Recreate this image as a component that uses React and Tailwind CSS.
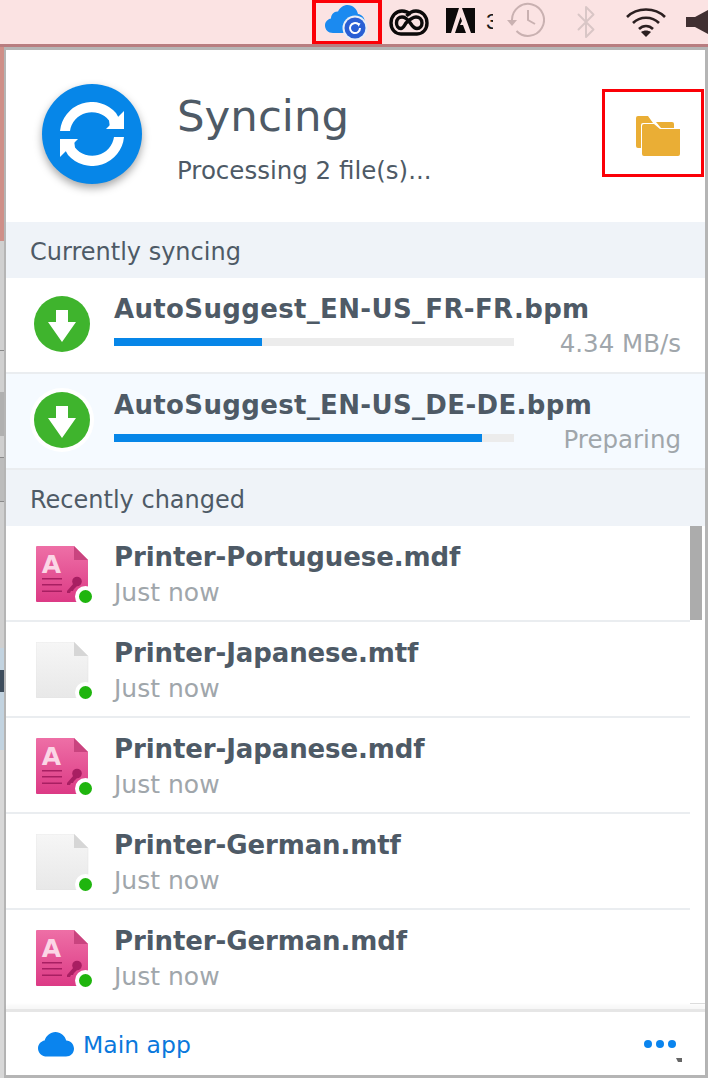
import React from "react";
import { Bluetooth } from "lucide-react";

const syncing = [
  { name: "AutoSuggest_EN-US_FR-FR.bpm", pct: 37, status: "4.34 MB/s", active: false },
  { name: "AutoSuggest_EN-US_DE-DE.bpm", pct: 92, status: "Preparing", active: true },
];

const recent = [
  { name: "Printer-Portuguese.mdf", type: "mdf" },
  { name: "Printer-Japanese.mtf", type: "mtf" },
  { name: "Printer-Japanese.mdf", type: "mdf" },
  { name: "Printer-German.mtf", type: "mtf" },
  { name: "Printer-German.mdf", type: "mdf" },
];

const CLOUD = "M9 24.5C4 24.5 0 21 0 16.2 0 12 3 9 6.6 8.4 8.2 3.6 12.4 0 17.4 0c5.2 0 9.5 3.6 10.8 8.5C32.8 8.8 36 12.4 36 16.8 36 21.3 32.5 24.5 28 24.5Z";

const MdfIcon = () => (
  <svg width="54" height="56" viewBox="0 0 54 56" className="block">
    <defs>
      <linearGradient id="mdfBody" x1="0" y1="0" x2="0" y2="1">
        <stop offset="0" stopColor="#ee6fa6" />
        <stop offset="1" stopColor="#dc3a85" />
      </linearGradient>
    </defs>
    <path d="M1 0H38L52 14V55a1 1 0 0 1-1 1H1a1 1 0 0 1-1-1V1a1 1 0 0 1 1-1Z" fill="url(#mdfBody)" />
    <path d="M38 0L52 14H38Z" fill="#c9447f" />
    <text x="15.5" y="27" fontSize="25" fontWeight="bold" textAnchor="middle" fill="#fbd6e6" fontFamily="'DejaVu Sans', sans-serif">A</text>
    <path d="M6 32h20v1.6H6ZM6 38h20v1.6H6ZM6 44.5h20v1.6H6Z" fill="#a81f62" />
    <circle cx="41" cy="35.5" r="4.8" fill="#a81f62" />
    <path d="M38 37L31 45v2h3l1-2h2l1-2 3-3Z" fill="#a81f62" />
  </svg>
);

const MtfIcon = () => (
  <svg width="54" height="56" viewBox="0 0 54 56" className="block">
    <defs>
      <linearGradient id="mtfBody" x1="0" y1="0" x2="0" y2="1">
        <stop offset="0" stopColor="#f6f6f6" />
        <stop offset="1" stopColor="#e8e8e8" />
      </linearGradient>
    </defs>
    <path d="M1 0H38L52 14V55a1 1 0 0 1-1 1H1a1 1 0 0 1-1-1V1a1 1 0 0 1 1-1Z" fill="url(#mtfBody)" stroke="#e2e2e2" strokeWidth="0.5" />
    <path d="M38 0L52 14H38Z" fill="#d6d6d6" />
  </svg>
);

const DownloadBadge = ({ ring }) => (
  <div className={`w-[64px] h-[64px] rounded-full flex items-center justify-center shrink-0 ${ring ? "bg-white" : ""}`}>
    <svg width="56" height="56" viewBox="0 0 56 56">
      <circle cx="28" cy="28" r="28" fill="#3fb42d" />
      <path d="M22 14H34V26H42L28 46 14 26H22Z" fill="#fff" />
    </svg>
  </div>
);

function MenuBar() {
  return (
    <div className="h-[47px] shrink-0 bg-[#fbe3e3] border-b-[3px] border-[#b87d80] flex items-center overflow-hidden">
      <div className="ml-[312px] w-[70px] h-[46px] border-[4px] border-[#fb0007] flex items-center justify-center shrink-0">
        <svg width="44" height="36" viewBox="0 0 44 36" className="mt-[1px]">
          <path d="M8 28C3 28 0 24.5 0 20.5 0 16.5 3 14 6 13.5 6 9 9.5 6 13 6.5 15 2.5 18.5 0 22.5 0 28 0 32 4 33 9 37 9.5 40 13 40 18 40 24 36 28 31 28Z" fill="#1b8af0" />
          <circle cx="30" cy="23" r="12.5" fill="#e9eef6" />
          <circle cx="30" cy="23" r="10.5" fill="#2a5fd4" />
          <path d="M35 23a5 5 0 1 1-1.8-3.8" fill="none" stroke="#fff" strokeWidth="2" />
          <path d="M32 17.5l3.5 1-2 3.2Z" fill="#fff" />
        </svg>
      </div>
      {/* creative cloud */}
      <svg width="40" height="28" viewBox="0 0 40 28" className="ml-[7px] shrink-0">
        <path d="M12 26H28C34 26 38 21 38 15 38 8 33 3 27 3 23 3 20 5 17.5 8M22 6.5C19 4 16 3 13 3 7 3 2 8 2 15 2 21 6 26 12 26" fill="none" stroke="#0c0a0a" strokeWidth="3.4" />
        <path d="M12 20.5C9 20.5 7.5 17.5 7.5 15 7.5 11 10 9 13 9 18 9 20 14 22 16 24 19 26 20.5 28 20.5 31 20.5 33 18 33 15 33 11 30 9 27 9 23 9 20 12 17 15 15 18 14 20.5 12 20.5Z" fill="none" stroke="#0c0a0a" strokeWidth="3.4" />
      </svg>
      {/* adobe */}
      <svg width="29" height="25" viewBox="0 0 29 25" className="ml-[17px] -mt-[4px] shrink-0">
        <path d="M0 0H29V25H0Z" fill="#0c0a0a" />
        <path d="M13 0H16L25 25H20L17 17H14L16 13 14.5 9 9 25H5Z" fill="#fbe3e3" />
      </svg>
      <div className="w-[7px] ml-[11px] overflow-hidden text-[22px] leading-none font-['Liberation_Sans',sans-serif] text-[#1a1a1a] shrink-0">3</div>
      {/* time machine */}
      <svg width="38" height="36" viewBox="0 0 38 36" className="ml-[14px] -mt-[4px] shrink-0">
        <path d="M5 18A16 16 0 1 1 9.5 29" fill="none" stroke="#c9b1b1" strokeWidth="2" />
        <path d="M0 18H10L5 24Z" fill="#c9b1b1" />
        <path d="M21 8V18L28 22" fill="none" stroke="#c9b1b1" strokeWidth="2" />
      </svg>
      <Bluetooth size={36} strokeWidth={1.3} className="text-[#d9c6c6] ml-[23px] shrink-0" />
      <svg width="42" height="32" viewBox="0 0 42 32" className="ml-[21px] shrink-0">
        <path d="M2 11C12 1 30 1 40 11M8 17C15 10 27 10 34 17M14 23C18 19 24 19 28 23" fill="none" stroke="#2b1f20" strokeWidth="2.6" />
        <path d="M16 26L21 31 26 26C23 24 19 24 16 26Z" fill="#2b1f20" />
      </svg>
      <svg width="22" height="24" viewBox="0 0 22 24" className="ml-[19px] shrink-0">
        <path d="M0 7H9L22 0V24L9 17H0Z" fill="#403032" />
      </svg>
    </div>
  );
}

function Header() {
  return (
    <div className="h-[172px] flex items-center shrink-0 bg-white">
      <div className="ml-[36px] mb-[4px] w-[100px] h-[100px] rounded-full bg-[#0686e8] shadow-[0_4px_8px_rgba(0,0,0,0.35)] flex items-center justify-center shrink-0">
        <svg width="64" height="64" viewBox="0 0 64 64">
          <path d="M0 29A32 32 0 0 1 56 11L60 18 50 26 49 18.5A22 22 0 0 0 10 29Z" fill="#fff" />
          <path d="M64 9V27H46Z" fill="#fff" />
          <g transform="rotate(180 32 32)">
            <path d="M0 29A32 32 0 0 1 56 11L60 18 50 26 49 18.5A22 22 0 0 0 10 29Z" fill="#fff" />
            <path d="M64 9V27H46Z" fill="#fff" />
          </g>
        </svg>
      </div>
      <div className="ml-[35px] mt-[4px] flex-1 text-[#4e5a66]">
        <div className="text-[43.5px] leading-[50px]">Syncing</div>
        <div className="text-[24.5px] leading-[28px] mt-[16px]">Processing 2 file(s)...</div>
      </div>
      <div className="w-[102px] h-[88px] mr-[1px] mb-[6px] border-[3px] border-[#fb0007] flex items-center justify-center shrink-0">
        <svg width="44" height="40" viewBox="0 0 44 40" className="ml-[10px] mt-[6px]">
          <path d="M0 2a2 2 0 0 1 2-2H12L17 7H7a2 2 0 0 0-2 2V32H2a2 2 0 0 1-2-2Z" fill="#eaae35" />
          <path d="M20 6H36a2 2 0 0 1 2 2V12H25Z" fill="#eaae35" />
          <path d="M6 10a2 2 0 0 1 2-2H18L24 13H44V38a2 2 0 0 1-2 2H8a2 2 0 0 1-2-2Z" fill="#eaae35" />
        </svg>
      </div>
    </div>
  );
}

const SectionTitle = ({ children }) => (
  <div className="h-[56px] bg-[#eff3f8] text-[#4e5a66] text-[24px] pl-[24px] pt-[3px] flex items-center shrink-0">{children}</div>
);

function SyncRow({ item }) {
  return (
    <div className={`h-[96px] shrink-0 flex border-b-2 border-[#eaedf0] ${item.active ? "bg-[#f5faff]" : "bg-white"}`}>
      <div className="w-[108px] pl-[24px] pt-[14px] shrink-0">
        <DownloadBadge ring={item.active} />
      </div>
      <div className="flex-1 pr-[24px] pt-[14px]">
        <div className="text-[26px] tracking-[0.35px] leading-[34px] font-bold text-[#4e5a66] whitespace-nowrap">{item.name}</div>
        <div className="w-[400px] h-[8px] bg-[#ececec] mt-[12px]">
          <div className="h-full bg-[#0686e8]" style={{ width: `${item.pct}%` }} />
        </div>
        <div className="text-[24.5px] leading-[28px] text-[#a0a6ab] text-right -mt-[16px]">{item.status}</div>
      </div>
    </div>
  );
}

function RecentRow({ item }) {
  return (
    <div className="h-[96px] shrink-0 flex border-b-2 last:border-b-0 border-[#eaedf0] bg-white">
      <div className="w-[108px] pl-[30px] pt-[20px] shrink-0 relative">
        {item.type === "mdf" ? <MdfIcon /> : <MtfIcon />}
        <span className="absolute left-[69px] top-[60px] w-[13px] h-[13px] rounded-full bg-[#1fb50e] border-[4px] border-white box-content" />
      </div>
      <div className="flex-1 pt-[14px]">
        <div className="text-[26px] tracking-[-0.1px] leading-[34px] font-bold text-[#4e5a66] whitespace-nowrap">{item.name}</div>
        <div className="text-[25px] leading-[28px] text-[#a0a6ab] mt-[5px]">Just now</div>
      </div>
    </div>
  );
}

function Footer() {
  return (
    <div className="h-[66px] shrink-0 bg-white border-t-[3px] border-[#e6e6e6] flex items-center pl-[32px] pr-[29px] pt-[4px] relative shadow-[0_-4px_3px_rgba(0,0,0,0.03)]">
      <svg width="36" height="25" viewBox="0 0 36 25" className="shrink-0 -mt-[2px]">
        <path d={CLOUD} fill="#0a84ee" />
      </svg>
      <span className="ml-[9px] text-[23.5px] text-[#0a78dc] flex-1">Main app</span>
      <div className="flex gap-[4px] mb-[4px]">
        <span className="w-[8px] h-[8px] rounded-full bg-[#0a84ee]" />
        <span className="w-[8px] h-[8px] rounded-full bg-[#0a84ee]" />
        <span className="w-[8px] h-[8px] rounded-full bg-[#0a84ee]" />
      </div>
      <svg width="6" height="4" viewBox="0 0 6 4" className="absolute right-[23px] bottom-[13px]">
        <path d="M0 0H6V4H2Z" fill="#666" />
      </svg>
    </div>
  );
}

export default function App() {
  return (
    <div className="w-[708px] h-[1078px] flex flex-col overflow-hidden bg-[#fbe3e3] font-['DejaVu_Sans',sans-serif]">
      <MenuBar />
      <div className="flex-1 flex min-h-0">
        {/* desktop showing behind the popup */}
        <div className="w-[4px] shrink-0 flex flex-col">
          <div className="h-[194px] bg-[#cf8f88]" />
          <div className="h-[110px] bg-[#d0d0d0] border-b border-[#8a8a8a]" />
          <div className="h-[41px] bg-[#d0d0d0]" />
          <div className="h-[44px] bg-[#b0b0b0]" />
          <div className="h-[22px] bg-[#cfcfcf] border-b border-[#8a8a8a]" />
          <div className="h-[44px] bg-[#bcbcbc] border-b border-[#8a8a8a]" />
          <div className="h-[146px] bg-[#cfcfcf]" />
          <div className="h-[22px] bg-[#c2d3e0]" />
          <div className="h-[22px] bg-[#3e4d5c]" />
          <div className="h-[58px] bg-[#c2d3e0]" />
          <div className="flex-1 bg-[#d8d8d8]" />
        </div>
        <div className="flex-1 min-w-0 flex flex-col bg-white border-l-2 border-t-[3px] border-r-[3px] border-b-[3px] border-[#b5b5b5]">
          <Header />
          <SectionTitle>Currently syncing</SectionTitle>
          {syncing.map((s) => (
            <SyncRow key={s.name} item={s} />
          ))}
          <SectionTitle>Recently changed</SectionTitle>
          <div className="flex-1 min-h-0 flex overflow-hidden">
            <div className="w-[684px] shrink-0 flex flex-col overflow-hidden">
              {recent.map((r) => (
                <RecentRow key={r.name} item={r} />
              ))}
            </div>
            <div className="flex-1 flex flex-col justify-between">
              <div className="w-[12px] h-[94px] bg-[#acacac]" />
              <div className="h-[1px] bg-[#dddddd] mb-[5px]" />
            </div>
          </div>
          <Footer />
        </div>
      </div>
    </div>
  );
}
